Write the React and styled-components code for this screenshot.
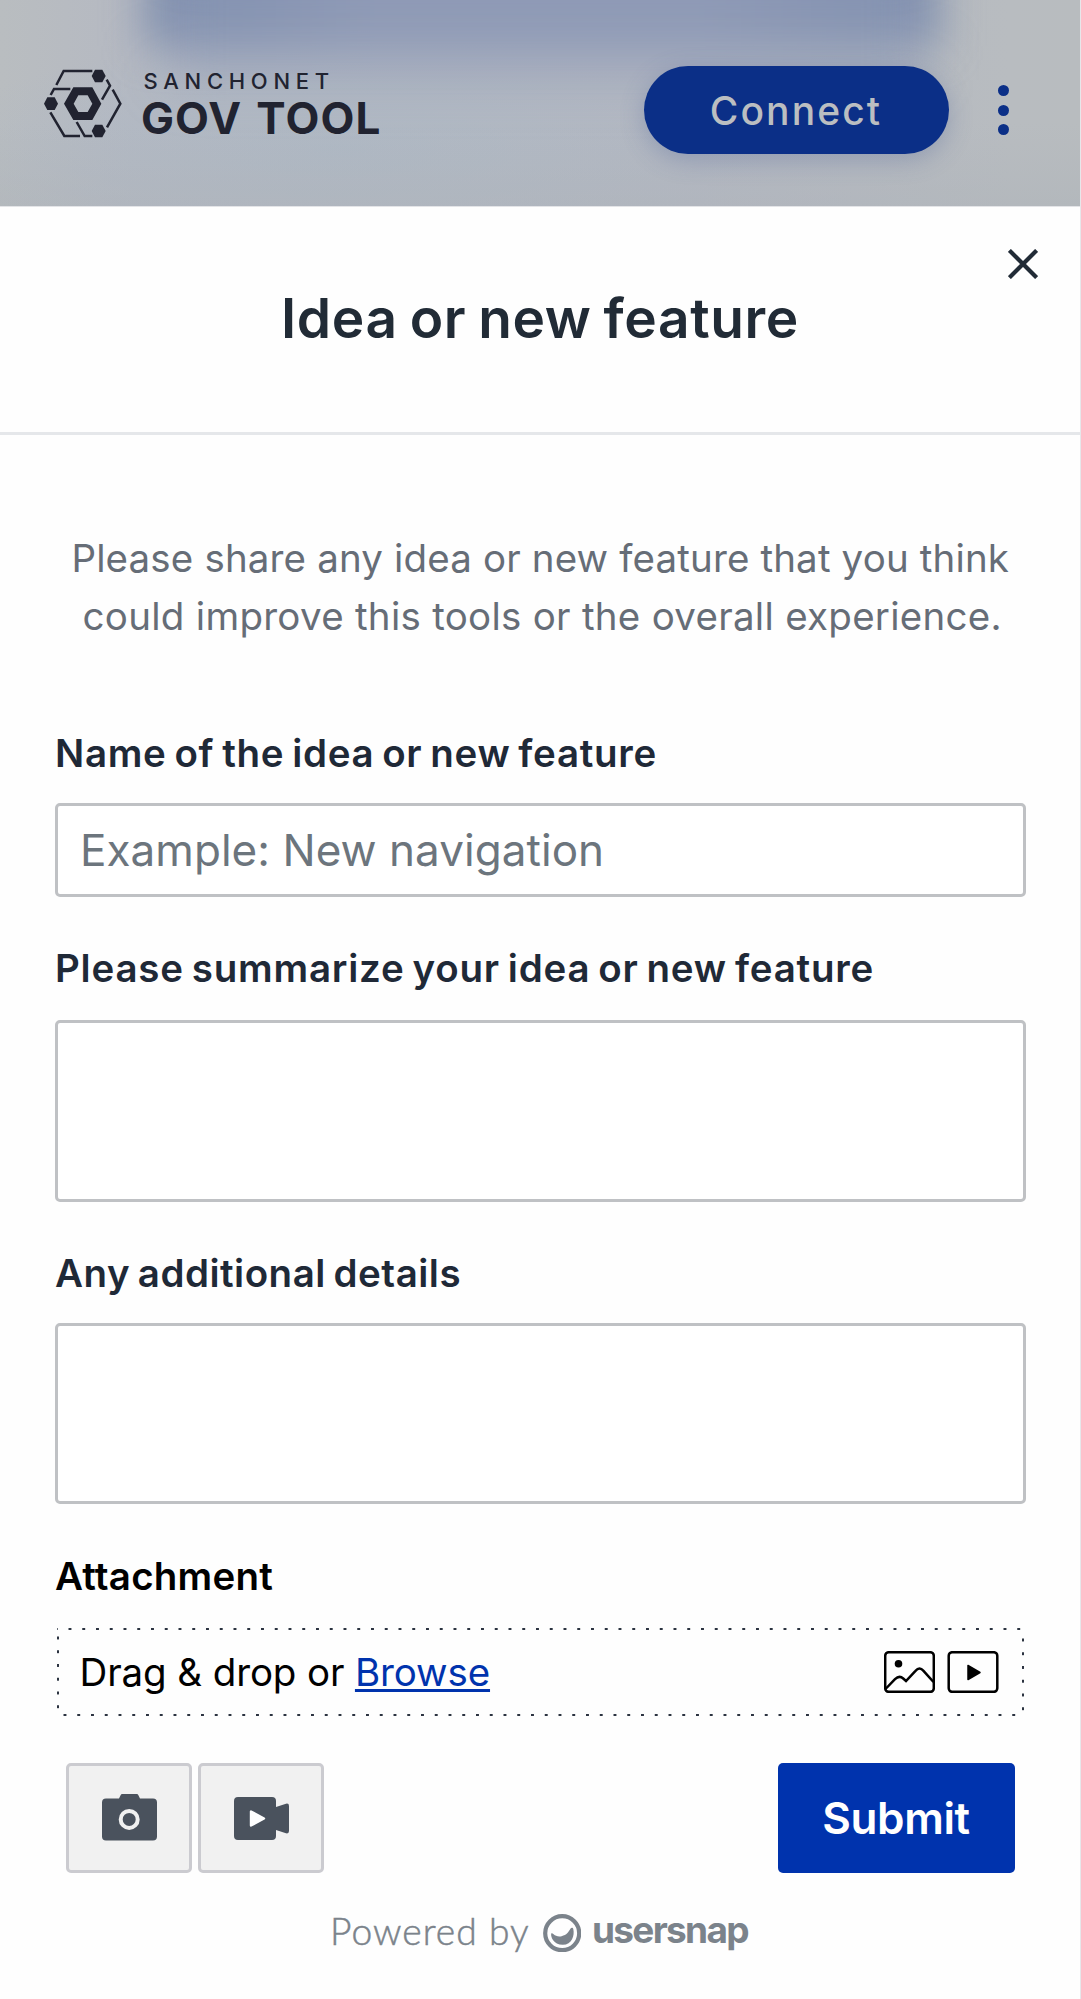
import React from "react";
import styled, { createGlobalStyle } from "styled-components";

const GlobalStyle = createGlobalStyle`
  * { box-sizing: border-box; }
  body {
    margin: 0;
    background: #fff;
    font-family: Inter, "Liberation Sans", sans-serif;
    overflow: hidden;
  }
`;

const Page = styled.div`
  display: flex;
  flex-direction: column;
  width: 1081px;
  height: 1999px;
  border-right: 1px solid #e6e7ea;
  background: #fefefe;
`;

const TopBar = styled.header`
  position: relative;
  isolation: isolate;
  overflow: hidden;
  display: flex;
  align-items: center;
  height: 206px;
  padding: 14px 71.5px 0 44px;
  background:
    linear-gradient(to bottom, transparent 60%, rgba(172, 178, 184, 0.4)),
    radial-gradient(ellipse 420px 110px at 340px 150px, rgba(174, 184, 196, 0.9), transparent),
    linear-gradient(to right, #b9bdc0 0, #b5b9c2 130px, #b4b8c2 700px, #b8bcc0 1010px, #b8bcbf 100%);

  &::before,
  &::after {
    content: "";
    position: absolute;
    z-index: -1;
  }

  &::before {
    left: 146px;
    top: -80px;
    width: 792px;
    height: 126px;
    background: linear-gradient(to right, #8190ae 0, #8391b0 100px, #919bb6 220px, #919bb6 560px, #8391b0 700px, #8190ae 100%);
    filter: blur(20px);
  }

  &::after {
    left: 170px;
    top: -40px;
    width: 750px;
    height: 120px;
    background: rgba(140, 152, 182, 0.45);
    filter: blur(26px);
  }
`;

const Brand = styled.div`
  display: flex;
  align-items: flex-start;
  gap: 18px;
  padding-bottom: 9px;
  color: #212330;
`;

const BrandMark = styled.svg`
  display: block;
  width: 78px;
  height: 69px;
  margin-top: 1px;
`;

const BrandNetwork = styled.div`
  padding-left: 3.5px;
  font-size: 22px;
  font-weight: 500;
  line-height: 26px;
  letter-spacing: 5.7px;
`;

const BrandName = styled.div`
  padding-left: 1px;
  font-size: 44px;
  font-weight: 700;
  line-height: 49px;
  letter-spacing: 1.1px;
  word-spacing: 2.5px;
  white-space: nowrap;
`;

const ConnectButton = styled.button`
  width: 305px;
  height: 88px;
  margin-left: auto;
  padding: 0;
  border: 0;
  border-radius: 44px;
  background: #0b2f87;
  color: #bbbec1;
  font: 500 39px Inter, sans-serif;
  letter-spacing: 2.1px;
  box-shadow: 0 6px 24px rgba(70, 92, 150, 0.32);
`;

const MenuButton = styled.button`
  display: flex;
  flex-direction: column;
  gap: 8.4px;
  margin-left: 49px;
  padding: 0;
  border: 0;
  background: none;
`;

const MenuDot = styled.span`
  width: 11px;
  height: 11px;
  border-radius: 50%;
  background: #0b2f87;
`;

const SheetHeader = styled.div`
  position: relative;
  height: 229px;
  padding-top: 78px;
  border-top: 1px solid #e3e4e7;
  border-bottom: 3px solid #e5e7ea;
`;

const Title = styled.h1`
  margin: 0;
  color: #212b36;
  font-size: 55px;
  font-weight: 600;
  line-height: 66px;
  letter-spacing: 0.65px;
  word-spacing: -2.6px;
  text-align: center;
`;

const CloseButton = styled.button`
  position: absolute;
  top: 42px;
  right: 42px;
  width: 30px;
  height: 30px;
  padding: 0;
  border: 0;
  background: none;

  svg { display: block; }
`;

const Form = styled.form`
  display: flex;
  flex-direction: column;
  padding: 94px 54.5px 0 55px;
`;

const Intro = styled.p`
  margin: 0 0 37px;
  color: #666d77;
  font-size: 38.5px;
  line-height: 58px;
  text-align: center;
`;

const IntroLine = styled.span`
  display: block;
  white-space: nowrap;
  letter-spacing: ${(p) => p.$spacing}px;
  padding-left: ${(p) => p.$shift || 0}px;
`;

const Label = styled.label`
  margin-top: ${(p) => p.$gap || 42}px;
  color: ${(p) => (p.$dark ? "#000" : "#1f2937")};
  font-size: 38.5px;
  font-weight: 600;
  line-height: 58px;
  letter-spacing: ${(p) => p.$spacing}px;
  word-spacing: -2.5px;
`;

const TextInput = styled.input`
  height: 94px;
  margin-top: 21px;
  padding: 0 22px;
  border: 3px solid #bfc1c4;
  border-radius: 5px;
  background: #fff;
  font: 400 44px Inter, sans-serif;
  letter-spacing: 0.05px;

  &::placeholder { color: #6c757d; opacity: 1; }
`;

const TextArea = styled.textarea`
  display: block;
  height: ${(p) => p.$height}px;
  margin-top: ${(p) => p.$gap}px;
  border: 3px solid #bfc1c4;
  border-radius: 5px;
  background: #fff;
  resize: none;
`;

const DropZone = styled.div`
  display: flex;
  align-items: center;
  height: 88px;
  margin: 23px 2px 0 2px;
  padding: 0 25px 0 22.5px;
  font-size: 38.5px;
  line-height: 58px;
  background-image:
    linear-gradient(to right, #2b3340 3px, transparent 3px),
    linear-gradient(to right, #2b3340 3px, transparent 3px),
    linear-gradient(to bottom, #2b3340 3px, transparent 3px),
    linear-gradient(to bottom, #2b3340 3px, transparent 3px);
  background-repeat: repeat-x, repeat-x, repeat-y, repeat-y;
  background-size: 13.75px 1.6px, 13.75px 1.6px, 1.6px 13.75px, 1.6px 13.75px;
  background-position: 11.5px 0, 6.5px 100%, 0 8.5px, 100% 10.5px;
`;

const DropText = styled.span`
  letter-spacing: -0.11px;
`;

const BrowseLink = styled.a`
  margin-left: 10.5px;
  color: #0033ad;
  letter-spacing: -0.1px;
  text-decoration: underline;
  text-decoration-thickness: 2.5px;
  text-underline-offset: 3px;
  text-decoration-skip-ink: none;
`;

const FileTypes = styled.div`
  display: flex;
  gap: 12px;
  margin-left: auto;

  svg { display: block; }
`;

const Actions = styled.div`
  display: flex;
  gap: 6px;
  height: 110px;
  margin: 47px 10.5px 0 11px;
`;

const CaptureButton = styled.button`
  display: flex;
  align-items: center;
  justify-content: center;
  width: 126px;
  padding: 0;
  border: 3px solid #cbcbd0;
  border-radius: 5px;
  background: #f1f1f1;
`;

const SubmitButton = styled.button`
  width: 237px;
  margin-left: auto;
  padding: 0 1px 0 0;
  border: 0;
  border-radius: 5px;
  background: #0033ad;
  color: #fff;
  font: 600 44px Inter, sans-serif;
  letter-spacing: -0.4px;
`;

const Footer = styled.footer`
  display: flex;
  align-items: center;
  height: 60px;
  margin-top: 30px;
  padding-left: 330px;
  color: #7b838b;
  line-height: 54px;
`;

const PoweredBy = styled.span`
  width: 212.5px;
  padding-bottom: 4px;
  font: 300 37.2px/54px Lato, sans-serif;
  letter-spacing: 1.05px;
  -webkit-text-stroke: 0.5px currentColor;
`;

const Vendor = styled.span`
  margin-left: 11px;
  padding-bottom: 6px;
  font-size: 37px;
  font-weight: 700;
  letter-spacing: -1.7px;
`;

const hexagon = (cx, cy) =>
  `M${cx - 21} ${cy}L${cx - 11} ${cy - 19}H${cx + 11}L${cx + 21} ${cy}L${cx + 11} ${cy + 19}H${cx - 11}Z`;

function GovToolMark() {
  return (
    <BrandMark viewBox="42 56 234 207" aria-hidden="true">
      <g fill="none" stroke="currentColor" strokeWidth="7.5">
        <path d="M79 104L101 62H187" />
        <path d="M230 88L240 106L216 148" />
        <path d="M248 118L271 160L231 231" />
        <path d="M62 134L72 116H121" />
        <path d="M61 186L103 257H150" />
        <path d="M140 215L164 257H187" />
      </g>
      <g fill="currentColor">
        <path d={hexagon(206, 77)} />
        <path d={hexagon(63, 160)} />
        <path d={hexagon(206, 242)} />
        <path
          fillRule="evenodd"
          d="M102 160L130 111H187L214 160L187 209H130ZM131 160L145 185H173L187 160L173 135H145Z"
        />
      </g>
    </BrandMark>
  );
}

function CloseIcon() {
  return (
    <svg width="30" height="30" viewBox="0 0 30 30" stroke="#212b36" strokeWidth="4.2">
      <path d="M1.4 1.4L28.6 28.6M28.6 1.4L1.4 28.6" />
    </svg>
  );
}

function PictureIcon() {
  return (
    <svg width="51" height="42" viewBox="0 0 51 42" fill="none" stroke="#000" strokeWidth="2.5">
      <rect x="1.2" y="1.2" width="48.6" height="39.6" rx="3.5" />
      <path d="M1.5 38L11 28.2Q15.3 24 19.2 27.5L22 30L31.5 19.8Q35.5 15.3 39.5 19.8L49.5 31" />
      <circle cx="14.5" cy="12.8" r="3.8" fill="#000" stroke="none" />
    </svg>
  );
}

function PlayIcon() {
  return (
    <svg width="52" height="42" viewBox="0 0 52 42" fill="none" stroke="#000" strokeWidth="2.5">
      <rect x="1.7" y="1.2" width="48.6" height="39.6" rx="3.5" />
      <path d="M21 14.5V28.5L33 21.5Z" fill="#000" strokeWidth="1.5" strokeLinejoin="round" />
    </svg>
  );
}

function CameraIcon() {
  return (
    <svg width="55" height="56" viewBox="0 0 55 56">
      <path
        fill="#4a525d"
        d="M4 8.6H17L18.6 5.2Q19 4 20.3 4H34.7Q36 4 36.4 5.2L38 8.6H51Q55 8.6 55 12.6V46.6Q55 50.6 51 50.6H4Q0 50.6 0 46.6V12.6Q0 8.6 4 8.6Z"
      />
      <circle cx="27.2" cy="29.4" r="8.5" fill="none" stroke="#f1f1f1" strokeWidth="4" />
    </svg>
  );
}

function VideoIcon() {
  return (
    <svg width="55" height="43" viewBox="0 0 55 43">
      <path
        fill="#4a525d"
        d="M4 0H38Q42 0 42 4V10L52 6.7Q55 6 55 9V34Q55 37 52 36.3L42 33V39Q42 43 38 43H4Q0 43 0 39V4Q0 0 4 0Z"
      />
      <path d="M17 14.5V28.5L30 21.5Z" fill="#fff" stroke="#fff" strokeWidth="2.4" strokeLinejoin="round" />
    </svg>
  );
}

function VendorMark() {
  return (
    <svg width="38.5" height="38.5" viewBox="0 0 38.5 38.5">
      <circle cx="19.2" cy="19.2" r="17" fill="none" stroke="currentColor" strokeWidth="4.2" />
      <path
        fill="currentColor"
        d="M8.2 19.8C7.5 22.5 10.3 30.8 19.8 30.8C29 30.8 31.8 21.5 30.3 15C29.9 13.2 28.2 13.4 27.4 14.8C25.5 18 23.8 21 18.6 22.2C15 23 12.6 21.8 10.6 20.2C9.6 19.4 8.5 18.8 8.2 19.8Z"
      />
    </svg>
  );
}

export default function App() {
  return (
    <>
      <GlobalStyle />
      <Page>
        <TopBar>
          <Brand>
            <GovToolMark />
            <div>
              <BrandNetwork>SANCHONET</BrandNetwork>
              <BrandName>GOV TOOL</BrandName>
            </div>
          </Brand>
          <ConnectButton>Connect</ConnectButton>
          <MenuButton aria-label="Menu">
            <MenuDot />
            <MenuDot />
            <MenuDot />
          </MenuButton>
        </TopBar>

        <SheetHeader>
          <Title>Idea or new feature</Title>
          <CloseButton aria-label="Close">
            <CloseIcon />
          </CloseButton>
        </SheetHeader>

        <Form>
          <Intro>
            <IntroLine $spacing={0.15}>Please share any idea or new feature that you think</IntroLine>
            <IntroLine $spacing={0.276} $shift={4}>could improve this tools or the overall experience.</IntroLine>
          </Intro>

          <Label htmlFor="name" $spacing={0.7}>Name of the idea or new feature</Label>
          <TextInput id="name" placeholder="Example: New navigation" />

          <Label htmlFor="summary" $spacing={0.78}>Please summarize your idea or new feature</Label>
          <TextArea id="summary" $gap={23} $height={182} />

          <Label htmlFor="details" $spacing={0.5}>Any additional details</Label>
          <TextArea id="details" $gap={21} $height={181} />

          <Label as="div" $dark $gap={43} $spacing={0.2}>Attachment</Label>
          <DropZone>
            <DropText>Drag &amp; drop or</DropText>
            <BrowseLink>Browse</BrowseLink>
            <FileTypes>
              <PictureIcon />
              <PlayIcon />
            </FileTypes>
          </DropZone>

          <Actions>
            <CaptureButton type="button" aria-label="Capture screenshot">
              <CameraIcon />
            </CaptureButton>
            <CaptureButton type="button" aria-label="Record video">
              <VideoIcon />
            </CaptureButton>
            <SubmitButton type="button">Submit</SubmitButton>
          </Actions>
        </Form>

        <Footer>
          <PoweredBy>Powered by</PoweredBy>
          <VendorMark />
          <Vendor>usersnap</Vendor>
        </Footer>
      </Page>
    </>
  );
}
